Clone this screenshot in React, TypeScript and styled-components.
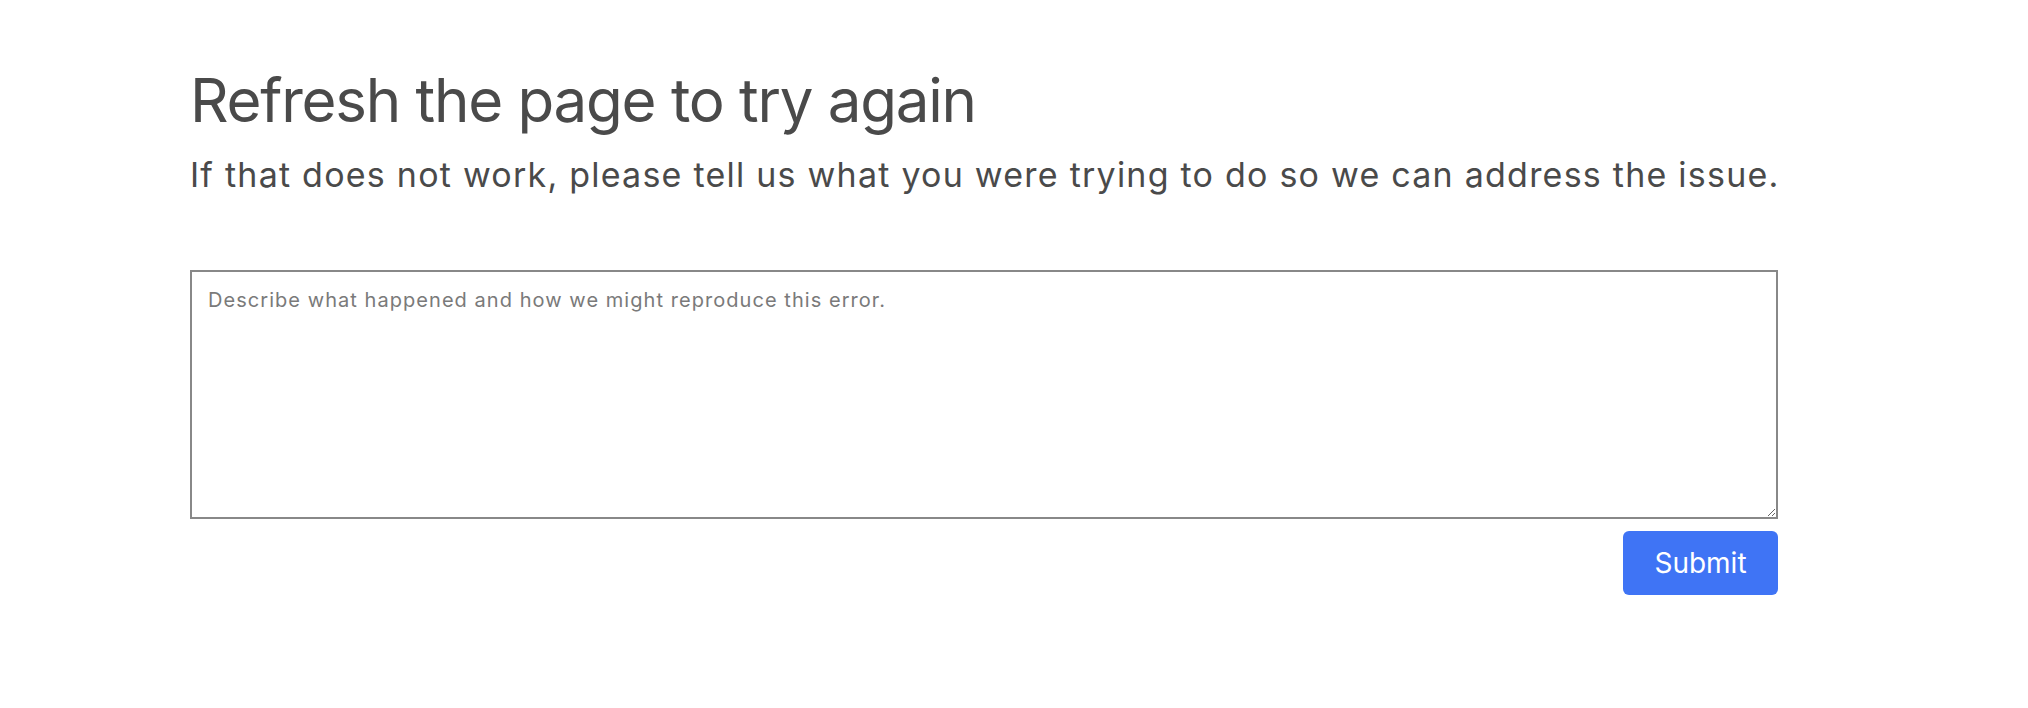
import React from "react";
import styled, { createGlobalStyle } from "styled-components";

const Global = createGlobalStyle`
  html, body { margin: 0; padding: 0; background: #ffffff; }
  body { font-family: Inter, "Noto Sans", sans-serif; color: #4a4a4a; }
  * { box-sizing: border-box; }
`;

const Page = styled.main`
  display: flex;
  flex-direction: column;
  padding: 64px 250px 0 190px;
`;

const Title = styled.h1`
  margin: 0;
  font-size: 60px;
  line-height: 72px;
  font-weight: 400;
  letter-spacing: -1.25px;
  color: #4a4a4a;
`;

const Subtitle = styled.p`
  margin: 19px 0 0;
  font-size: 34px;
  line-height: 40px;
  font-weight: 400;
  letter-spacing: 1.23px;
  color: #4a4a4a;
  white-space: nowrap;
`;

const Form = styled.form`
  display: flex;
  flex-direction: column;
  margin-top: 75px;
`;

const Field = styled.textarea`
  width: 100%;
  height: 249px;
  border: 2px solid #888888;
  border-radius: 0;
  padding: 16px;
  font-family: Inter, "Noto Sans", sans-serif;
  font-size: 20px;
  line-height: 24px;
  letter-spacing: 1.05px;
  color: #333;
  resize: both;
  outline: none;
  &::placeholder { color: #7a7a7a; }
`;

const Actions = styled.div`
  display: flex;
  justify-content: flex-end;
  margin-top: 12px;
`;

const SubmitButton = styled.button`
  width: 155px;
  height: 64px;
  border: none;
  border-radius: 6px;
  background: #3f74f5;
  color: #ffffff;
  font-family: Inter, "Noto Sans", sans-serif;
  font-size: 28px;
  font-weight: 400;
  cursor: pointer;
`;

export default function App() {
  return (
    <>
      <Global />
      <Page>
        <Title>Refresh the page to try again</Title>
        <Subtitle>If that does not work, please tell us what you were trying to do so we can address the issue.</Subtitle>
        <Form onSubmit={(e) => e.preventDefault()}>
          <Field placeholder="Describe what happened and how we might reproduce this error." />
          <Actions>
            <SubmitButton type="submit">Submit</SubmitButton>
          </Actions>
        </Form>
      </Page>
    </>
  );
}
